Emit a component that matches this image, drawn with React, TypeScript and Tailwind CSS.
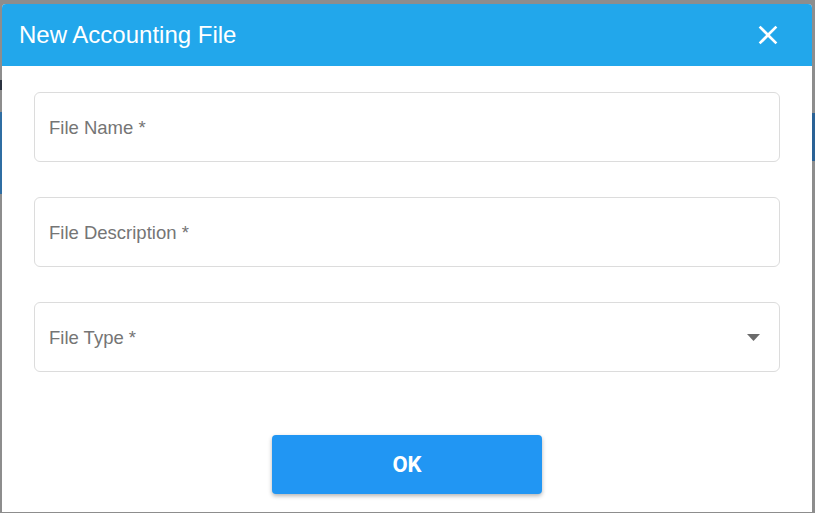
import React from "react";

const fields = [
  { label: "File Name *", select: false },
  { label: "File Description *", select: false },
  { label: "File Type *", select: true },
];

function Field({ label, select }: { label: string; select: boolean }) {
  return (
    <div className="flex h-[70px] items-center justify-between rounded-[6px] border border-[#dcdcdc] pl-[14px] pr-[19px]">
      <span className="mt-[2px] text-[18.5px] text-[#757575]">{label}</span>
      {select ? (
        <svg width="13" height="7" viewBox="0 0 13 7" className="mt-[1px]">
          <path d="M0 0h13L6.5 7z" fill="#6b6b6b" />
        </svg>
      ) : null}
    </div>
  );
}

export default function App() {
  return (
    <div
      className="flex h-[513px] w-[815px] overflow-hidden bg-[#8d8d8d] pt-[4px]"
      style={{ fontFamily: '"Liberation Sans", Arial, sans-serif' }}
    >
      <div className="flex w-[2px] flex-col">
        <div className="mt-[76px] h-[10px] bg-[#2b3340]" />
        <div className="mt-[22px] h-[82px] bg-[#2f6ea3]" />
      </div>

      <div className="flex h-[508px] w-[810px] flex-col rounded-t-[4px] bg-white">
        <div className="flex h-[62px] items-center justify-between rounded-t-[4px] bg-[#22a7eb] pl-[17px] pr-[28px]">
          <h1 className="text-[24px] text-white">New Accounting File</h1>
          <svg width="32" height="32" viewBox="0 0 24 24" fill="white">
            <path d="M19 6.41L17.59 5 12 10.59 6.41 5 5 6.41 10.59 12 5 17.59 6.41 19 12 13.41 17.59 19 19 17.59 13.41 12z" />
          </svg>
        </div>

        <div className="flex flex-col gap-[35px] px-[32px] pt-[26px]">
          {fields.map((f) => (
            <Field key={f.label} label={f.label} select={f.select} />
          ))}
        </div>

        <div className="mt-[63px] flex justify-center">
          <button
            type="button"
            className="h-[59px] w-[270px] rounded-[4px] bg-[#2196f3] text-[22px] font-bold text-white shadow-[0_2px_4px_rgba(0,0,0,0.3)]"
            style={{ fontFamily: "Roboto, sans-serif" }}
          >
            OK
          </button>
        </div>
      </div>

      <div className="flex w-[3px] flex-col">
        <div className="mt-[109px] h-[48px] bg-[#2a6296]" />
      </div>
    </div>
  );
}
